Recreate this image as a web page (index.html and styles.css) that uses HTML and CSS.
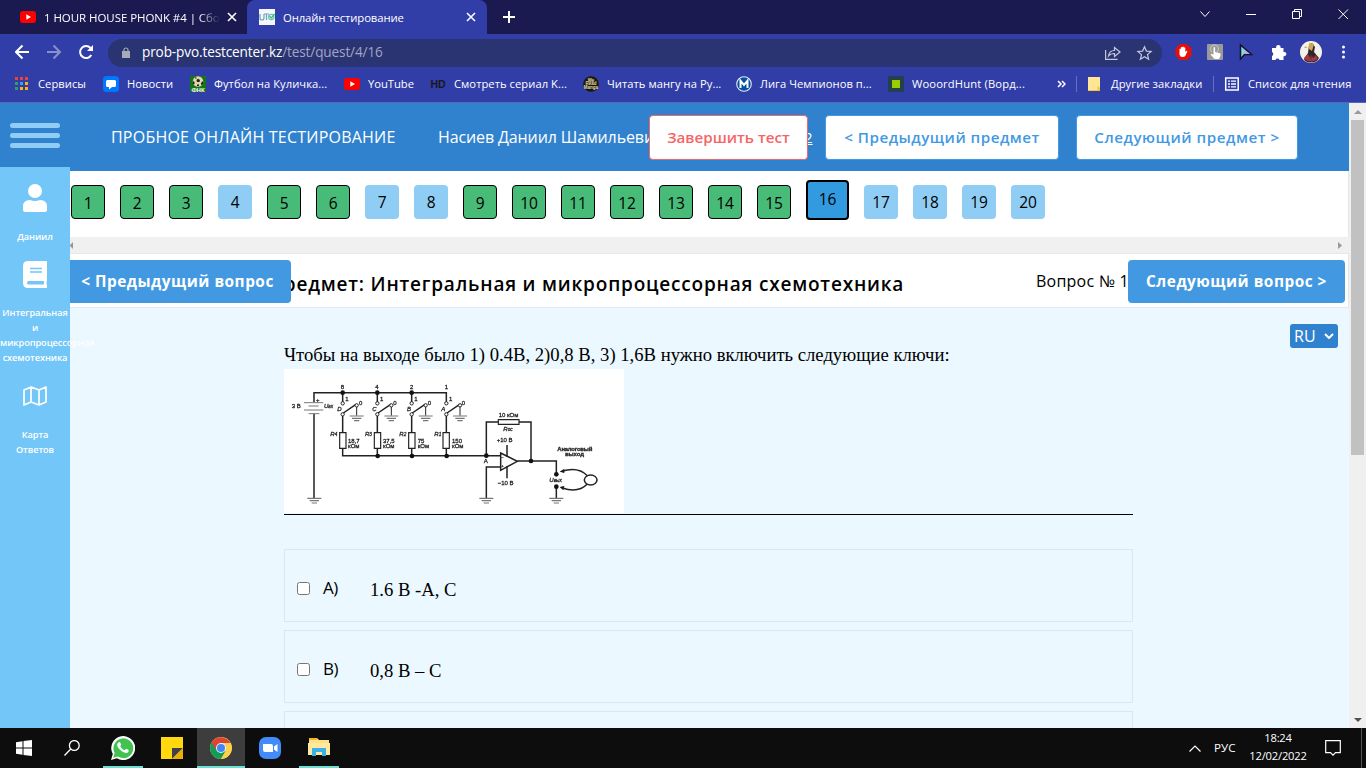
FILE: index.html
```html
<!DOCTYPE html>
<html lang="ru">
<head>
<meta charset="utf-8">
<title>Онлайн тестирование</title>
<link rel="stylesheet" href="styles.css">
</head>
<body>
<div class="tabs">
  <div class="tab tab-idle">
    <svg class="i16" viewBox="0 0 16 16"><rect y="2" width="16" height="12" rx="3" fill="#f00"/><path d="M6.3 5.3v5.4L11 8z" fill="#fff"/></svg>
    <span class="tab-text fade">1 HOUR HOUSE PHONK #4 | Сбо</span>
    <svg class="x" viewBox="0 0 10 10"><path d="M1 1l8 8M9 1L1 9"/></svg>
  </div>
  <div class="tab tab-active">
    <svg class="i16" viewBox="0 0 16 16"><rect width="16" height="16" fill="#f4f8fa"/><path d="M1 5v4q0 2 2 2t2-2V5M5 5h5M7.500 5v6" fill="none" stroke="#6da4b9" stroke-width="1.200"/><circle cx="12.300" cy="8" r="2.700" fill="none" stroke="#7fb4c4" stroke-width="1.200"/><path d="M10.500 7l2 2 3-4" fill="none" stroke="#1fce73" stroke-width="1.300"/></svg>
    <span class="tab-text">Онлайн тестирование</span>
    <svg class="x" viewBox="0 0 10 10"><path d="M1 1l8 8M9 1L1 9"/></svg>
  </div>
  <svg class="plus" viewBox="0 0 12 12"><path d="M6 0v12M0 6h12" stroke="#fff" stroke-width="2"/></svg>
  <svg class="winctl" viewBox="0 0 146 16" fill="none" stroke="#fff" stroke-width="1"><path d="M.5 5.500l4.500 5 4.500-5M46 8.500h10M92.500 5.500h7v7h-7zM94.500 5v-1.500h7v7H100M138.500 3.500l9.500 9.500M148 3.500l-9.500 9.500"/></svg>
</div>
<div class="toolbar">
  <svg class="navs" viewBox="0 0 80 16" fill="none" stroke-width="2"><path d="M14 8H1M7.500 1.500L1 8l6.500 6.500" stroke="#fff"/><path d="M32 8h13M38.500 1.500L45 8l-6.500 6.500" stroke="#8a90cc"/><path d="M76.300 11A6 6 0 1 1 75.500 4" stroke="#fff"/><path d="M78 1v6h-6z" fill="#fff"/></svg>
  <div class="address">
    <svg class="lock" viewBox="0 0 8 11"><path d="M0 4h8v7H0z" fill="#a6abb8"/><path d="M2 4.500V3a2 2 0 0 1 4 0v1.500" fill="none" stroke="#a6abb8" stroke-width="1.200"/></svg>
    <span class="url">prob-pvo.testcenter.kz<i>/test/quest/4/16</i></span>
    <svg class="share" viewBox="0 0 48 16" fill="none" stroke="#c4c8dc" stroke-width="1.200"><path d="M.6 5v9.400h12M3.500 11c.5-4 3-5.500 6-5.500V2.500L15 7l-5.500 4.500V8.500c-3 0-4.500.5-6 2.500zM39.500 1.800l1.900 4.300 4.700.4-3.600 3.100 1.100 4.600-4.100-2.500-4.100 2.500 1.100-4.600-3.600-3.100 4.700-.4z"/></svg>
  </div>
  <svg class="exts" viewBox="0 0 180 24">
    <path d="M7 4h7l4.500 4.500v7L14 20H7l-4.500-4.500v-7z" fill="#e1100b"/><path d="M6.500 12V9q.7-.9 1.400 0V7.500q.7-1 1.400 0V7q.8-1 1.500 0v.7q.8-.8 1.500 0V12l1.200-1.200q1-.4.9.5l-2 4.500q-1 1.300-3 1.200-2.500 0-2.900-2.500z" fill="#fff"/>
    <rect x="34" y="4" width="16" height="16" rx="1" fill="#9a9a9a"/><path d="M39 12a4 4 0 1 1 5 0" fill="none" stroke="#ccc"/><path d="M40.500 7.500q1-.8 1.600 0v4.500l5 1.200q1 .8.2 3L46 19h-4.500L37.500 14.500l1-.8 2 1z" fill="#fff"/>
    <path d="M67.500 5v14l4-4.500h7z" fill="#82d6e5" stroke="#15132e" stroke-width="1.500"/><path d="M71 14l6-.2-5-3.200z" fill="#c8a4e4"/>
    <path d="M99 8h4.200a2.300 2.300 0 1 1 4.300 0h3v4a2.200 2.200 0 1 1 0 4.200V20h-4a2.100 2.100 0 0 0-4 0H99v-4a2.200 2.200 0 0 0 0-4z" fill="#fff"/>
    <circle cx="138" cy="12" r="11" fill="#f3f1ea"/><path d="M136 5l3-2 3 4-1 5 5 6-2 3q-6 3-12 0l-1-2 4-6z" fill="#34252d"/><path d="M136 3l5 1-2 7-3-2zM131 8l2-2 1 2z" fill="#ccaa54"/><path d="M131 18l4-4 2 4 1-4 2 4 3-3 2 4q-7 5-14 0z" fill="#9b3b42"/><path d="M137 11l2 1-1 9z" fill="#2a2933"/>
    <g fill="#fff"><circle cx="170.500" cy="7" r="1.500"/><circle cx="170.500" cy="12" r="1.500"/><circle cx="170.500" cy="17" r="1.500"/></g>
  </svg>
</div>
<div class="bookmarks">
  <div class="bm b1"><svg viewBox="0 0 16 16"><g fill="#ef4136"><path d="M0 1h3v3H0zM5 1h3v3H5zM10 1h3v3h-3z"/></g><path d="M0 6h3v3H0z" fill="#2f9e61"/><path d="M5 6h3v3H5z" fill="#3b9cf5"/><path d="M10 6h3v3h-3zM5 11h3v3H5zM10 11h3v3h-3z" fill="#fbb20c"/><path d="M0 11h3v3H0z" fill="#2f9e61"/></svg><span>Сервисы</span></div>
  <div class="bm b2"><svg viewBox="0 0 16 16"><rect width="16" height="16" rx="3.500" fill="#07f"/><path d="M4.500 4h7q1.500 0 1.500 1.500v4q0 1.500-1.500 1.500H9l-3 2.500V11H4.500Q3 11 3 9.500v-4Q3 4 4.500 4z" fill="#fff"/></svg><span>Новости</span></div>
  <div class="bm b3"><svg viewBox="0 0 16 16"><path d="M0 0h16v16H0z" fill="#147516"/><circle cx="8" cy="5.500" r="5.200" fill="#dfd5b0"/><path d="M6.500 4L8 2.800 10 4l-.5 2H7zM3 5l1.500 1v2L3 8zM11 7l2-2v3l-2 1zM7 8.500h2V10H7zM5 1.500h1.500v1H5z" fill="#242018"/><text x="8" y="15.700" font-size="6" font-weight="bold" text-anchor="middle" fill="#fff">ФНК</text></svg><span>Футбол на Куличка...</span></div>
  <div class="bm b4"><svg viewBox="0 0 16 16"><rect y="2" width="16" height="12" rx="3" fill="#f00"/><path d="M6.300 5.300v5.400L11 8z" fill="#fff"/></svg><span>YouTube</span></div>
  <div class="bm b5"><svg viewBox="0 0 16 16"><text x="8" y="12" font-size="10.500" font-weight="bold" text-anchor="middle" fill="#17171c">HD</text></svg><span>Смотреть сериал K...</span></div>
  <div class="bm b6"><svg viewBox="0 0 16 16"><circle cx="8" cy="8" r="7.800" fill="#19180f"/><g font-size="4.500" font-weight="bold" fill="#e5dba3" text-anchor="middle"><text x="8" y="5.500">We</text><text x="8" y="9">Read</text><text x="8" y="12.500">Manga</text></g></svg><span>Читать мангу на Ру...</span></div>
  <div class="bm b7"><svg viewBox="0 0 16 16"><circle cx="8" cy="8" r="7.300" fill="#07509f" stroke="#e5edf7" stroke-width="1.100"/><path d="M4.500 12V4.800L8 9l3.500-4.200V12" fill="none" stroke="#fff" stroke-width="2"/></svg><span>Лига Чемпионов п...</span></div>
  <div class="bm b8"><svg viewBox="0 0 16 16"><path d="M0 0h16v16H0z" fill="#24404f"/><path d="M4 4h8v8H4z" fill="#99cd00"/></svg><span>WooordHunt (Ворд...</span></div>
  <svg class="more" viewBox="0 0 9 8"><path d="M1 1l3 3-3 3M5 1l3 3-3 3" fill="none" stroke="#fff" stroke-width="1.500"/></svg>
  <div class="bm b9"><svg viewBox="0 0 16 16"><path d="M1 1h12v14H1z" fill="#ffe694"/><path d="M10.500 10l2.500 2v3H1v-1h9.500z" fill="#f2c53d"/></svg><span>Другие закладки</span></div>
  <div class="bm b10"><svg viewBox="0 0 16 16"><path d="M1.700 2h12.500v12H1.700z" fill="none" stroke="#fff" stroke-width="1.500"/><path d="M4 5.200h2M4 8h2M4 10.800h2M7 5.200h5M7 8h5M7 10.800h5" stroke="#fff" stroke-width="1.300"/></svg><span>Список для чтения</span></div>
</div>
<div class="page">
  <div class="left">
    <div class="burger"><b></b><b></b><b></b></div>
    <div class="side">
      <svg class="s-user" viewBox="0 0 24 28" fill="#fff"><circle cx="12" cy="7" r="7"/><path d="M0 28v-5.500Q0 16 7 16q5 2 10 0 7 0 7 6.500V26q0 2-2 2H2q-2 0-2-2z"/></svg>
      <p class="p1">Даниил</p>
      <svg class="s-book" viewBox="0 0 24 27"><path d="M5 0h19v19q-1 3 0 6v2H5q-5 0-5-5V5q0-5 5-5z" fill="#fff"/><path d="M7 7.500h12M7 11h12" stroke="#73c6f8" stroke-width="1.400"/><path d="M5 20h16v3.500H5q-2-1.700 0-3.500z" fill="#73c6f8"/></svg>
      <p class="p2">Интегральная и <span>микропроцессорная</span> схемотехника</p>
      <svg class="s-map" viewBox="0 0 24 20" fill="none" stroke="#fff" stroke-width="1.700" stroke-linejoin="round"><path d="M1 4l7-3 8 3 7-3v15l-7 3-8-3-7 3zM8 1v15M16 4v15"/></svg>
      <p class="p3">Карта Ответов</p>
    </div>
  </div>
  <div class="main">
    <div class="header">
      <span class="brand">ПРОБНОЕ ОНЛАЙН ТЕСТИРОВАНИЕ</span>
      <span class="person">Насиев Даниил Шамильевич</span><u class="num">2</u>
      <div class="actions">
        <button class="hb stop">Завершить тест</button>
        <button class="hb prev">&lt; Предыдущий предмет</button>
        <button class="hb next">Следующий предмет &gt;</button>
      </div>
    </div>
    <div class="quests">
      <b class="q d">1</b><b class="q d">2</b><b class="q d">3</b><b class="q">4</b><b class="q d">5</b><b class="q d">6</b><b class="q">7</b><b class="q">8</b><b class="q d">9</b><b class="q d">10</b><b class="q d">11</b><b class="q d">12</b><b class="q d">13</b><b class="q d">14</b><b class="q d">15</b><b class="q cur">16</b><b class="q">17</b><b class="q">18</b><b class="q">19</b><b class="q">20</b>
    </div>
    <div class="hscroll"><svg viewBox="0 0 4 7"><path d="M3 0v7L-.5 3.500z"/></svg><svg viewBox="0 0 4 7"><path d="M0 0v7l4-3.500z"/></svg></div>
    <div class="subject">
      <span class="title">Предмет: Интегральная и микропроцессорная схемотехника</span>
      <span class="qno">Вопрос № 16</span>
      <button class="qb back">&lt; Предыдущий вопрос</button>
      <button class="qb fwd">Следующий вопрос &gt;</button>
    </div>
    <div class="content">
      <div class="lang">RU<svg viewBox="0 0 10 6"><path d="M1 1l4 4 4-4" fill="none" stroke="#fff" stroke-width="2"/></svg></div>
      <div class="question">
        <p class="qt">Чтобы на выходе было 1) 0.4В, 2)0,8 В, 3) 1,6В нужно включить следующие ключи:</p>
        <svg class="circuit" viewBox="12 102 1020 432">
          <path d="M12 102h1020v432H12z" fill="#fff"/>
          <g class="soft" fill="none" stroke="#222" stroke-width="4.500">
            <path d="M102 202V173H499V200M102 236V490M188 173v28M292 173v28M395 173v28"/>
            <path d="M188 242v51M292 242v51M395 242v51M499 242v51M188 340v22H662M292 340v22M395 340v22M499 340v22"/>
            <path d="M619 362V261h36M717 261h36V378M712 378H829v38M662 396H619v94M829 456v34M681 330v36M681 394v36"/>
            <path d="M662 354v52l50-27z"/>
            <path d="M179 293h19v47h-19zM283 293h19v47h-19zM386 293h19v47h-19zM489 293h19v47h-19zM655 254h62v14h-62z" fill="#fff" stroke-width="3.500"/>
            <path d="M190 234l38-26M294 234l38-26M397 234l38-26M501 234l38-26"/>
            <path d="M230 216v26M334 216v26M437 216v26M540 216v26" stroke-width="3"/>
            <path d="M72 203h58M86 213h30M72 225h58M86 236h32" stroke="#777" stroke-width="3"/>
            <g stroke="#777" stroke-width="3.500"><path id="g" d="M209 243h42M216 250h28M222 257h16"/><use href="#g" x="104"/><use href="#g" x="207"/><use href="#g" x="310"/><use href="#g" x="-127" y="247"/><use href="#g" x="389" y="247"/><use href="#g" x="599" y="247"/></g>
            <g fill="#fff" stroke-width="3"><circle cx="188" cy="205" r="5"/><circle cx="292" cy="205" r="5"/><circle cx="395" cy="205" r="5"/><circle cx="499" cy="205" r="5"/><circle cx="188" cy="238" r="5"/><circle cx="292" cy="238" r="5"/><circle cx="395" cy="238" r="5"/><circle cx="499" cy="238" r="5"/><circle cx="230" cy="211" r="5"/><circle cx="334" cy="211" r="5"/><circle cx="437" cy="211" r="5"/><circle cx="540" cy="211" r="5"/></g>
            <g fill="#111" stroke="none"><circle cx="188" cy="173" r="7"/><circle cx="292" cy="173" r="7"/><circle cx="395" cy="173" r="7"/><circle cx="293" cy="363" r="7"/><circle cx="396" cy="363" r="7"/><circle cx="500" cy="363" r="7"/><circle cx="619" cy="362" r="7"/><circle cx="753" cy="378" r="7"/><circle cx="829" cy="418" r="7"/><circle cx="829" cy="455" r="7"/><path d="M839 410l14-9v13zM839 456l11 10 3-13z"/></g>
            <path d="M847 408q48-14 75 14M847 459q48 16 75-12"/><ellipse cx="932" cy="435" rx="19" ry="15"/>
          </g>
          <g class="soft lab" font-size="18">
            <text x="182" y="162">8</text><text x="286" y="162">4</text><text x="390" y="162">2</text><text x="494" y="162">1</text>
            <text x="196" y="198">1</text><text x="300" y="198">1</text><text x="403" y="198">1</text><text x="507" y="198">1</text>
            <text x="237" y="210">0</text><text x="340" y="210">0</text><text x="443" y="210">0</text><text x="545" y="210">0</text>
            <text x="35" y="219">3 В</text><text x="108" y="200">+</text><text x="132" y="219" font-style="italic">U<tspan font-size="14">вх</tspan></text>
            <g font-style="italic"><text x="172" y="227">D</text><text x="277" y="227">C</text><text x="381" y="227">B</text><text x="484" y="227">A</text><text x="151" y="304">R<tspan font-size="14">4</tspan></text><text x="255" y="304">R<tspan font-size="14">3</tspan></text><text x="358" y="304">R<tspan font-size="14">2</tspan></text><text x="463" y="304">R<tspan font-size="14">1</tspan></text><text x="670" y="287">R<tspan font-size="14">ос</tspan></text><text x="808" y="442">U<tspan font-size="14">вых</tspan></text></g>
            <text x="204" y="323">18,7</text><text x="204" y="338">кОм</text><text x="309" y="323">37,5</text><text x="309" y="338">кОм</text><text x="413" y="323">75</text><text x="413" y="338">кОм</text><text x="516" y="323">150</text><text x="516" y="338">кОм</text>
            <text x="656" y="247">10 кОм</text><text x="650" y="322">+10 В</text><text x="653" y="449">−10 В</text><text x="611" y="385">A</text><text x="664" y="371" font-size="12">−</text><text x="664" y="397" font-size="12">+</text>
            <text x="832" y="349" textLength="105" font-weight="bold">Аналоговый</text><text x="855" y="364" textLength="57" font-weight="bold">выход</text>
          </g>
        </svg>
        <label class="opt"><input type="checkbox"><span class="let">A)</span><span class="ans">1.6 В -А, С</span></label>
        <label class="opt"><input type="checkbox"><span class="let">B)</span><span class="ans">0,8 В – С</span></label>
        <label class="opt"></label>
      </div>
    </div>
  </div>
  <div class="vscroll"><svg viewBox="0 0 8 4"><path d="M0 4h8L4 0z" fill="#9a9a9a"/></svg><div class="thumb"></div><svg viewBox="0 0 8 4"><path d="M0 0h8L4 4z" fill="#505050"/></svg></div>
</div>
<div class="taskbar">
  <div class="t"><svg width="16" height="16" viewBox="0 0 16 16" fill="#fff"><path d="M0 2.200l6.500-.9v6.200H0zM7.500 1.100L16 0v7.500H7.500zM0 8.500h6.500v6.200L0 13.800zM7.500 8.500H16V16l-8.500-1.100z"/></svg></div>
  <div class="t"><svg width="16" height="16" viewBox="0 0 16 16" fill="none" stroke="#fff" stroke-width="1.300"><circle cx="10.300" cy="5.500" r="4.900"/><path d="M6.800 9L.5 15.500"/></svg></div>
  <div class="t wa on"><svg width="24" height="24" viewBox="0 0 24 24"><path d="M0 24l1.800-6A12 12 0 1 1 6 22.300z" fill="#fff"/><path d="M2.200 21.800l1.500-4.700A9.900 9.900 0 1 1 7 20.600z" fill="#40c351"/><path d="M7.500 6.500q1-1 1.700 0l1 2.200-1 1.500q1.500 2.800 4.400 4l1.500-1.500 2.500 1.200q.5 2.600-2.600 3.100-2.500 0-5.500-2.700-3.500-3.200-3.300-5.500 0-1.500 1.300-2.300z" fill="#fff"/></svg></div>
  <div class="t"><svg width="22" height="22" viewBox="0 0 22 22"><path d="M0 0h22v22H0z" fill="#ffd90d"/><path d="M11 11h11L11 22z" fill="#404148"/><path d="M22 11v11H11z" fill="#eead05"/></svg></div>
  <div class="t chrome on"><svg width="22" height="22" viewBox="0 0 22 22"><circle cx="11" cy="11" r="11" fill="#fdd04c"/><path d="M11 11l-9.500-5.500A11 11 0 0 0 11 22l5-8z" fill="#0f9d58"/><path d="M11 22l4.500-8L11 6h9.500A11 11 0 0 1 11 22z" fill="#fdd04c"/><path d="M11 6h9.500A11 11 0 0 0 1.500 5.500L6 13z" fill="#db4437"/><circle cx="11" cy="11" r="5" fill="#f1f1f1"/><circle cx="11" cy="11" r="4" fill="#4285f4"/></svg></div>
  <div class="t"><svg width="22" height="22" viewBox="0 0 22 22"><rect width="22" height="22" rx="7" fill="#438bf9"/><path d="M4 7h8q2 0 2 2v6H6q-2 0-2-2zM15 9.500L18.500 7v8L15 12.500z" fill="#fff"/></svg></div>
  <div class="t ex on"><svg width="22" height="20" viewBox="0 0 22 20"><path d="M1 0h8l2 2h10v15H1z" fill="#ffe08a"/><path d="M1 0h8v2H1z" fill="#f6b91b"/><path d="M0 5h22v12H0z" fill="#ffe99f"/><path d="M4 18v-8h14v8h-4v-4H8v4z" fill="#39b1e8"/></svg></div>
  <div class="tray">
    <svg width="12" height="7" viewBox="0 0 12 7"><path d="M.5 6.500L6 1l5.500 5.500" fill="none" stroke="#fff" stroke-width="1.200"/></svg>
    <span class="kb">РУС</span>
    <span class="clock">18:24<br>12/02/2022</span>
    <svg class="note" width="16" height="16" viewBox="0 0 16 16"><path d="M.7.700h14.600v12h-4.800L8 15.200l-2.500-2.500H.7z" fill="none" stroke="#fff" stroke-width="1.200"/></svg>
  </div>
</div>
</body>
</html>
```
FILE: styles.css
```css
* { box-sizing: border-box; }
body { margin: 0; width: 1366px; height: 768px; overflow: hidden; display: flex; flex-direction: column; font-family: "Open Sans", "Noto Sans", sans-serif; color: #000; }
svg { display: block; flex: none; }
p { margin: 0; }
button { font-family: inherit; padding: 0; white-space: nowrap; }
span { white-space: nowrap; }

/* browser chrome */
.tabs { height: 34px; background: #1a1a50; display: flex; align-items: center; color: #fff; }
.tab { height: 34px; display: flex; align-items: center; flex: none; font-size: 11.3px; }
.tab-idle { width: 247px; padding: 0 10px 0 20px; }
.tab-active { width: 240px; padding: 0 11px 0 12px; background: #313ea7; border-radius: 8px 8px 0 0; }
.i16 { width: 16px; height: 16px; margin-right: 8px; }
.tab-text { flex: 1; letter-spacing: -.1px; }
.tab-idle .tab-text { flex: 0 0 176px; margin-right: 7px; font-size: 11.5px; letter-spacing: -.06px; }
.fade { -webkit-mask-image: linear-gradient(90deg, #000 88%, transparent); mask-image: linear-gradient(90deg, #000 88%, transparent); }
.x { width: 10px; height: 10px; fill: none; stroke: #fff; stroke-width: 1.6; }
.plus { width: 12px; height: 12px; margin-left: 16px; }
.winctl { width: 146px; height: 16px; margin: -6px 20px 0 auto; overflow: visible; }
.toolbar { height: 34px; background: #313ea7; display: flex; align-items: center; padding: 2px 0 0 15px; }
.navs { width: 80px; height: 16px; margin-right: 13px; }
.address { width: 1054px; height: 28px; margin-top: 1px; border-radius: 14px; background: #2b3472; display: flex; align-items: center; padding: 0 9px 0 14px; }
.lock { width: 8px; height: 11px; margin-right: 12px; }
.url { flex: 1; color: #fff; font-size: 13.6px; letter-spacing: -.13px; margin-top: -2px; }
.url i { font-style: normal; color: #a0a5c4; }
.share { width: 48px; height: 16px; }
.exts { width: 180px; height: 24px; margin-left: 11px; }
.bookmarks { height: 35px; background: #313ea7; border-bottom: 1px solid #5a64b8; display: flex; align-items: center; padding: 0 0 2px 15px; color: #fff; font-size: 11.2px; }
.bm { display: flex; align-items: center; gap: 8px; flex: none; letter-spacing: .05px; }
.bm span { margin-top: -2px; }
.bm svg { width: 16px; height: 16px; }
.bm text { font-family: "Liberation Sans", sans-serif; letter-spacing: 0; }
.b1 { width: 88px; gap: 7px; }
.b2 { width: 87px; }
.b3 { width: 154px; }
.b4 { width: 86px; letter-spacing: 0; }
.b5, .b6 { width: 153px; }
.b7 { width: 152px; }
.b8 { width: 169px; letter-spacing: .15px; }
.more { width: 9px; height: 8px; margin-right: 10px; }
.b9 { width: 137px; padding-left: 10px; border-left: 1px solid #6770bf; }
.b10 { padding-left: 10px; border-left: 1px solid #6770bf; }

/* page */
.page { height: 625px; display: flex; }
.left { width: 70px; display: flex; flex-direction: column; z-index: 2; }
.burger { height: 64px; background: #3182ce; padding: 20px 10px 19px; display: flex; flex-direction: column; gap: 5px; }
.burger b { height: 5px; border-radius: 3px; background: #90cdf4; }
.side { flex: 1; background: #73c6f8; color: #fff; display: flex; flex-direction: column; align-items: center; padding-top: 17px; font-size: 9.2px; line-height: 15px; font-weight: 600; text-align: center; letter-spacing: -.07px; }
.side p { width: 70px; }
.s-user { width: 24px; height: 28px; }
.p1 { margin: 17px 0 17px; }
.s-book { width: 24px; height: 27px; }
.p2 { margin: 17px 0 21px; }
.s-map { width: 24px; height: 20px; }
.side .p3 { margin-top: 21px; padding: 0 12px; }
.main { width: 1279px; display: flex; flex-direction: column; }
.header { position: relative; height: 68px; background: #3182ce; color: #fff; display: flex; align-items: center; padding-left: 41px; font-size: 16px; flex: none; }
.brand { width: 327px; letter-spacing: .22px; }
.person { width: 366px; letter-spacing: -.12px; }
.num { font-size: 15px; }
.actions { position: absolute; left: 579px; top: 12px; display: flex; gap: 17px; }
.hb { height: 45px; border: 1px solid #4299e1; border-radius: 4px; background: #fff; color: #4299e1; font-size: 15.2px; font-weight: 600; padding-bottom: 2px; }
.stop { width: 159px; border-color: #f56565; color: #f56565; }
.prev { width: 234px; letter-spacing: .48px; }
.next { width: 222px; letter-spacing: .52px; }
.quests { height: 66px; background: #fff; border-right: 1px solid #e2e8f0; display: flex; align-items: flex-end; gap: 15px; padding: 0 0 18px 1px; flex: none; }
.q { width: 34px; height: 34px; border-radius: 4px; background: #90cdf4; font-size: 15.5px; font-weight: 400; line-height: 34px; text-align: center; letter-spacing: -.2px; }
.q.d { background: #48bb78; border: 1px solid #000; line-height: 35px; }
.q.cur { width: 43px; height: 40px; margin-bottom: -1px; border: 2px solid #000; background: #329be0; line-height: 35px; }
.hscroll { height: 17px; background: #f0f0f0; border-bottom: 1px solid #e2e8f0; display: flex; justify-content: space-between; align-items: center; padding-right: 7px; flex: none; }
.hscroll svg { width: 4px; height: 7px; fill: #989898; }
.subject { position: relative; height: 54px; background: #fff; border: solid #e2e8f0; border-width: 0 1px 1px 0; display: flex; align-items: center; flex: none; }
.title { width: 966px; padding: 7px 0 0 199px; flex: none; font-size: 19px; font-weight: 600; letter-spacing: .8px; }
.qno { font-size: 16px; letter-spacing: .22px; }
.qb { position: absolute; top: 6px; height: 43px; border: 0; border-radius: 4px; background: #4299e1; color: #fff; font-size: 15.4px; font-weight: 700; letter-spacing: .5px; }
.back { left: 0; width: 221px; border-radius: 0 4px 4px 0; padding-right: 6px; }
.fwd { left: 1058px; width: 217px; }
.content { flex: 1; background: #ebf8ff; position: relative; overflow: hidden; padding-left: 214px; }
.lang { position: absolute; left: 1220px; top: 16px; width: 48px; height: 24px; border-radius: 3px; background: #3182ce; color: #fff; display: flex; align-items: center; justify-content: space-between; padding: 0 4px; font-size: 16px; }
.lang svg { width: 10px; height: 6px; margin-top: -1px; }
.question { width: 849px; padding-top: 34px; background: linear-gradient(#000, #000) 0 206px / 849px 1px no-repeat; }
.qt { height: 27px; line-height: 26px; font-family: "Liberation Serif", serif; font-size: 18.67px; white-space: nowrap; }
.circuit { width: 340px; height: 144px; }
.soft { filter: blur(1.3px); }
.lab { font-family: "Liberation Sans", sans-serif; fill: #222; stroke: #222; stroke-width: .8px; }
.opt { display: flex; align-items: center; height: 73px; margin-bottom: 8px; border: 1px solid #d9e7f0; padding: 6px 0 0 12px; }
.circuit + .opt { margin-top: 36px; }
.opt input { width: 13px; height: 13px; margin: 0; }
.let { width: 47px; margin: -2px 0 0 13px; font-size: 17px; letter-spacing: -.6px; }
.ans { font-family: "Liberation Serif", serif; font-size: 18.67px; padding-top: 3px; }
.vscroll { width: 17px; background: #f0f0f0; display: flex; flex-direction: column; align-items: center; padding: 7px 0 6px; }
.vscroll svg { width: 8px; height: 4px; }
.thumb { width: 13px; height: 335px; background: #c1c1c1; margin: 6px 0 auto; }

/* taskbar */
.taskbar { height: 40px; background: #0d0d0d; display: flex; color: #fff; }
.t { width: 48px; margin-right: 1px; display: flex; align-items: center; justify-content: center; flex: none; }
.t:first-child { margin-right: 0; }
.t:nth-child(2) { margin-right: 3px; }
.on { background: linear-gradient(#6adfd2, #6adfd2) 4px 38px / 40px 2px no-repeat; }
.chrome { background: linear-gradient(#6adfd2, #6adfd2) 0 38px / 48px 2px no-repeat #3d3d3d; }
.tray { margin-left: auto; display: flex; align-items: center; font-size: 11.2px; border-right: 1px solid #55555a; height: 40px; margin-right: 4px; }
.kb { width: 25px; margin: -2px 0 0 13px; font-size: 11.6px; }
.clock { width: 58px; margin: -2px 0 0 10px; text-align: center; line-height: 18px; letter-spacing: -.2px; }
.note { margin: 0 20px 0 18px; }
```
